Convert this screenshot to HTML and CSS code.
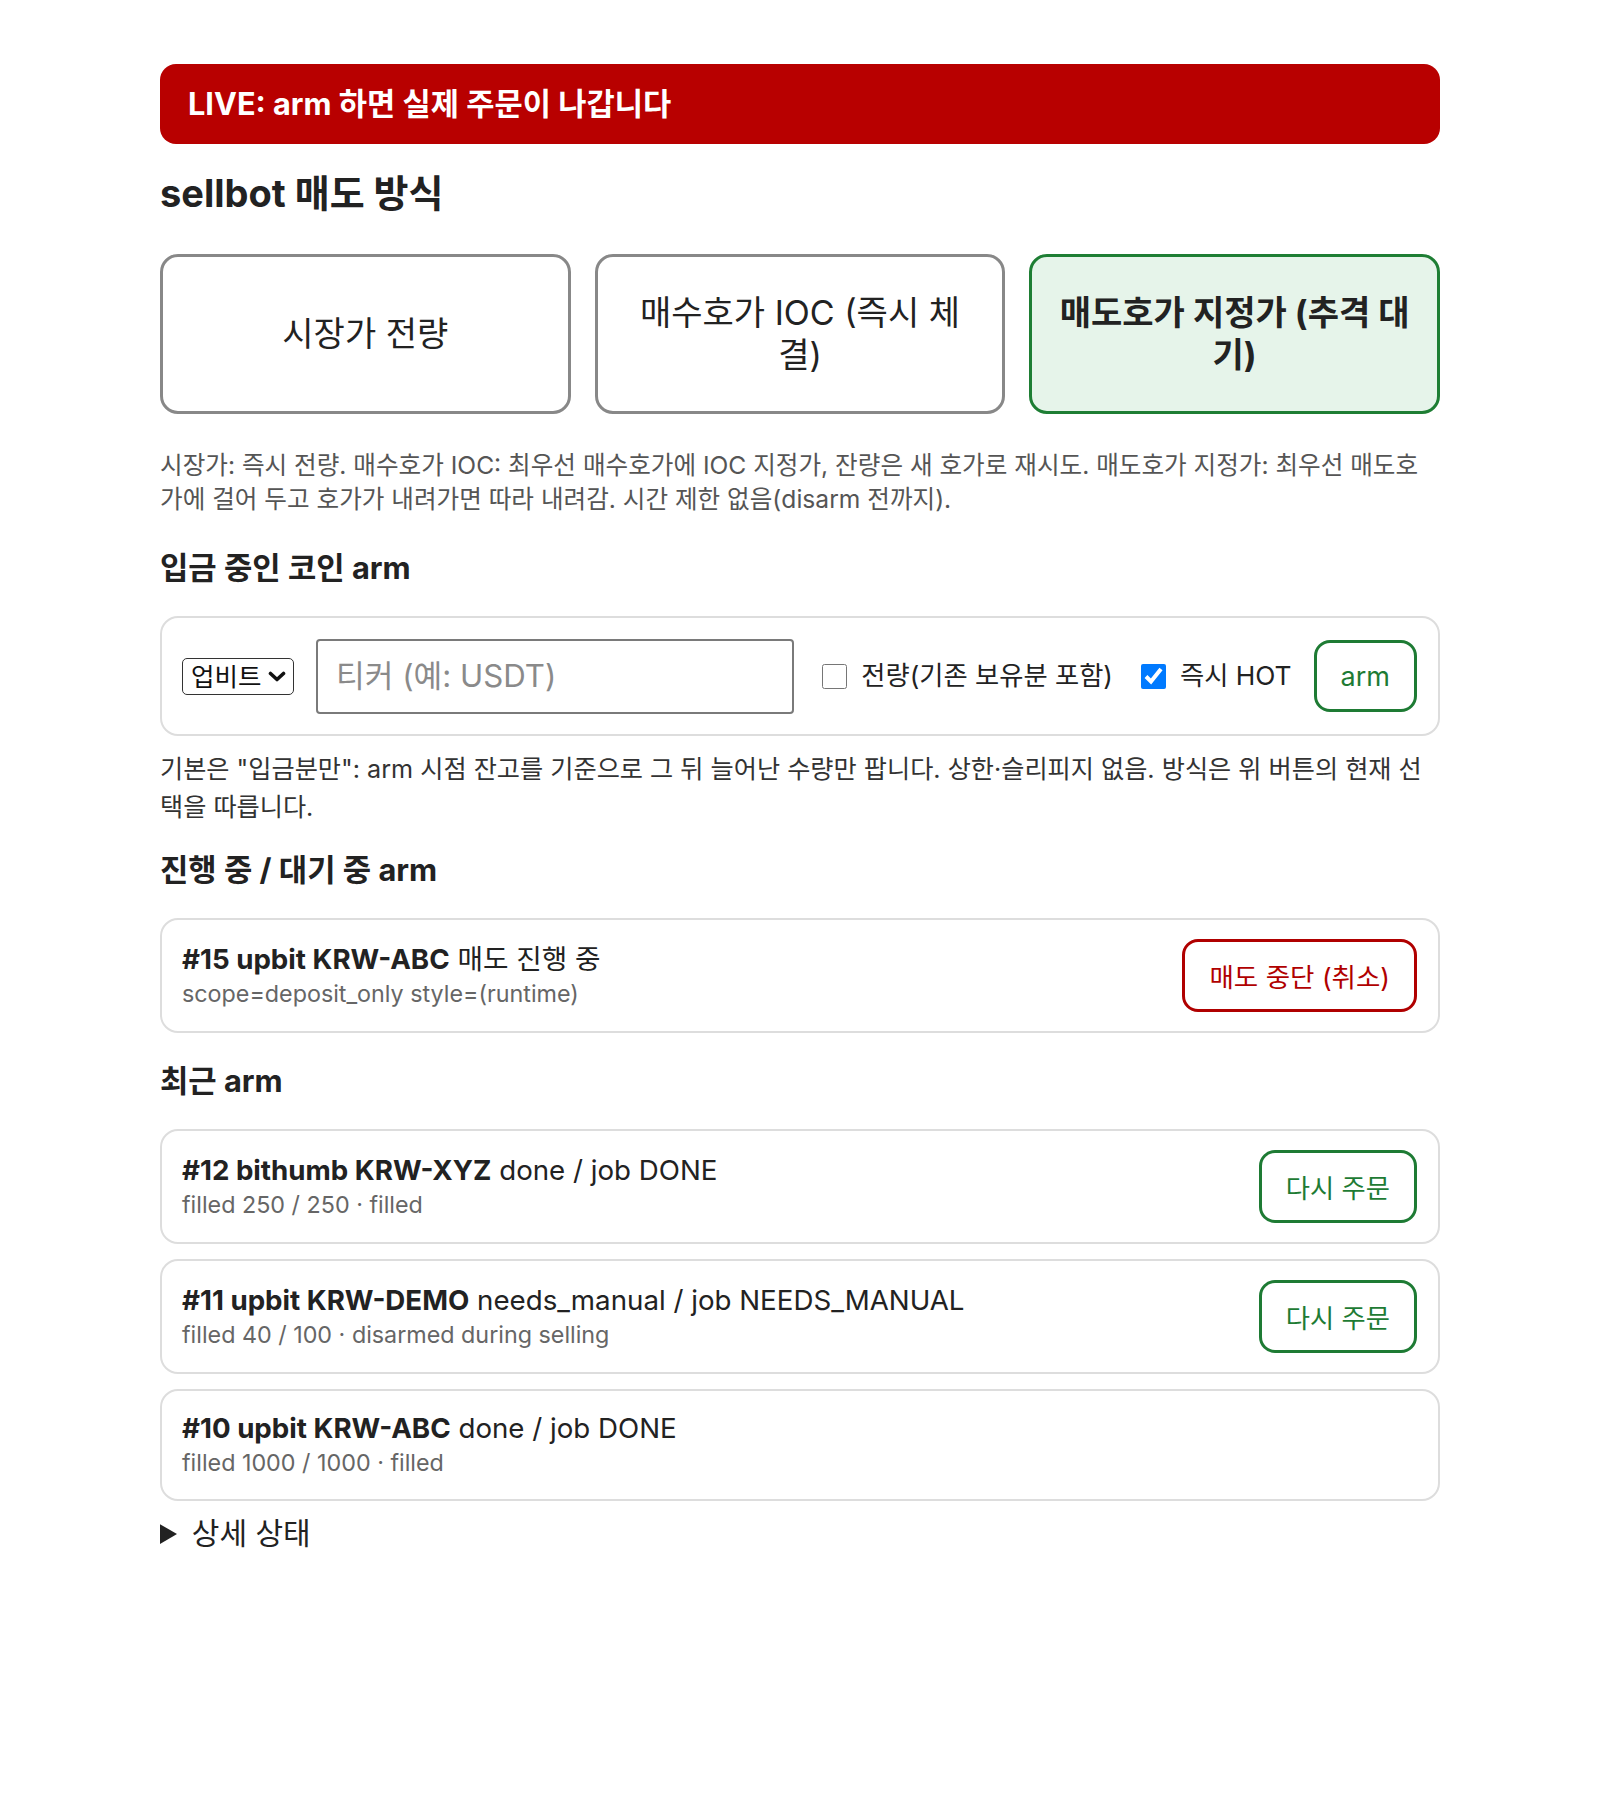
FILE: index.html
```html
<!DOCTYPE html>
<html lang="ko">
<head>
<meta charset="utf-8">
<title>sellbot</title>
<link rel="stylesheet" href="styles.css">
</head>
<body>
<div class="page">
  <div class="banner">LIVE: arm 하면 실제 주문이 나갑니다</div>

  <h2 class="title">sellbot 매도 방식</h2>
  <div class="modes">
    <button class="mode">시장가 전량</button>
    <button class="mode">매수호가 IOC (즉시 체결)</button>
    <button class="mode active">매도호가 지정가 (추격 대기)</button>
  </div>
  <p class="desc">시장가: 즉시 전량. 매수호가 IOC: 최우선 매수호가에 IOC 지정가, 잔량은 새 호가로 재시도. 매도호가 지정가: 최우선 매도호가에 걸어 두고 호가가 내려가면 따라 내려감. 시간 제한 없음(disarm 전까지).</p>

  <h3 class="section">입금 중인 코인 arm</h3>
  <div class="panel arm-form">
    <span class="select-wrap">
      <select class="exch">
        <option>업비트</option>
        <option>빗썸</option>
      </select>
      <svg class="chev" viewBox="0 0 18 11" aria-hidden="true"><path d="M2.5 2.5 L9 8.5 L15.5 2.5" fill="none" stroke="#111" stroke-width="3.6" stroke-linecap="round" stroke-linejoin="round"/></svg>
    </span>
    <input class="ticker" type="text" placeholder="티커 (예: USDT)">
    <label class="check"><input type="checkbox"><span>전량(기존 보유분 포함)</span></label>
    <label class="check"><input type="checkbox" checked><span>즉시 HOT</span></label>
    <button class="btn btn-green btn-arm">arm</button>
  </div>
  <p class="note">기본은 "입금분만": arm 시점 잔고를 기준으로 그 뒤 늘어난 수량만 팝니다. 상한·슬리피지 없음. 방식은 위 버튼의 현재 선택을 따릅니다.</p>

  <h3 class="section">진행 중 / 대기 중 arm</h3>
  <div class="jobs">
    <div class="panel job">
      <div class="job-text">
        <div class="job-title"><b>#15 upbit KRW-ABC</b> 매도 진행 중</div>
        <div class="job-sub">scope=deposit_only style=(runtime)</div>
      </div>
      <button class="btn btn-red">매도 중단 (취소)</button>
    </div>
  </div>

  <h3 class="section">최근 arm</h3>
  <div class="jobs">
    <div class="panel job">
      <div class="job-text">
        <div class="job-title"><b>#12 bithumb KRW-XYZ</b> done / job DONE</div>
        <div class="job-sub">filled 250 / 250 · filled</div>
      </div>
      <button class="btn btn-green">다시 주문</button>
    </div>
    <div class="panel job">
      <div class="job-text">
        <div class="job-title"><b>#11 upbit KRW-DEMO</b> needs_manual / job NEEDS_MANUAL</div>
        <div class="job-sub">filled 40 / 100 · disarmed during selling</div>
      </div>
      <button class="btn btn-green">다시 주문</button>
    </div>
    <div class="panel job">
      <div class="job-text">
        <div class="job-title"><b>#10 upbit KRW-ABC</b> done / job DONE</div>
        <div class="job-sub">filled 1000 / 1000 · filled</div>
      </div>
    </div>
  </div>

  <details class="details">
    <summary>상세 상태</summary>
    <pre class="state">{}</pre>
  </details>
</div>
</body>
</html>
```

FILE: styles.css
```css
* { box-sizing: border-box; }

body {
  margin: 0;
  background: #fff;
  color: #222;
  font-family: Inter, "Noto Sans CJK KR", sans-serif;
}

.page {
  width: 1280px;
  margin: 0 auto;
  padding: 64px 0 120px;
}

.banner {
  background: #b80000;
  color: #fff;
  font-weight: 700;
  font-size: 30.7px;
  line-height: 40px;
  padding: 20px 28px;
  border-radius: 16px;
}

.title {
  font-size: 38px;
  line-height: 44px;
  font-weight: 700;
  margin: 27px 0 39px;
  color: #222;
}

.modes {
  display: grid;
  grid-template-columns: repeat(3, 1fr);
  gap: 24px;
}

.mode {
  min-height: 160px;
  border: 3px solid #888;
  border-radius: 18px;
  background: #fff;
  color: #222;
  font-family: inherit;
  font-size: 34px;
  line-height: 42px;
  font-weight: 400;
  padding: 0 24px;
  display: flex;
  align-items: center;
  justify-content: center;
  text-align: center;
}

.mode.active {
  border-color: #1e7e34;
  background: #e6f4ea;
  font-weight: 700;
}

.desc {
  margin: 34px 0 34px;
  font-size: 24.6px;
  line-height: 34px;
  color: #555;
}

.section {
  font-size: 30.8px;
  line-height: 36px;
  font-weight: 700;
  margin: 30px 0 30px;
  color: #222;
}

.note + .section { margin-top: 26px; }

.panel {
  border: 2px solid #ddd;
  border-radius: 18px;
  background: #fff;
}

.arm-form {
  display: flex;
  align-items: center;
  gap: 22px;
  padding: 20.5px 21px 20.5px 20px;
}

.select-wrap {
  position: relative;
  display: inline-flex;
}

.exch {
  appearance: none;
  -webkit-appearance: none;
  width: 112px;
  height: 37px;
  padding: 0 32px 0 8px;
  font-family: inherit;
  font-size: 25.5px;
  color: #111;
  background: #fff;
  border: 1.5px solid #333;
  border-radius: 5px;
}

.chev {
  position: absolute;
  right: 8px;
  top: 13px;
  width: 18px;
  height: 11px;
  pointer-events: none;
}

.ticker {
  flex: 1;
  min-width: 0;
  height: 75px;
  padding: 0 18px;
  font-family: inherit;
  font-size: 31.2px;
  color: #222;
  border: 2px solid #7a7a7a;
  border-radius: 4px;
  background: #fff;
}

.ticker::placeholder { color: #8a8a8a; }

.check {
  display: flex;
  align-items: center;
  gap: 14px;
  font-size: 26.3px;
  line-height: 36px;
  white-space: nowrap;
  color: #222;
}

.check input {
  width: 25px;
  height: 25px;
  margin: 0 0 0 6px;
  accent-color: #007aff;
}

.btn {
  flex: none;
  height: 73px;
  padding: 0 24px;
  font-family: inherit;
  font-size: 26.3px;
  background: #fff;
  border: 3px solid;
  border-radius: 16px;
  white-space: nowrap;
}

.btn-arm { font-size: 27px; height: 72px; }

.btn-green { color: #1e7b34; border-color: #1e7b34; }
.btn-red { color: #b00000; border-color: #b00000; font-size: 26.5px; }

.note {
  margin: 14px 0 0;
  font-size: 25.2px;
  line-height: 38px;
  color: #333;
}

.jobs {
  display: flex;
  flex-direction: column;
  gap: 15px;
}

.job {
  display: flex;
  align-items: center;
  justify-content: space-between;
  gap: 20px;
  padding: 19px 21px 19px 20px;
}

.job-title {
  font-size: 27.7px;
  line-height: 36px;
  color: #222;
}

.job-title b { font-weight: 700; }

.job-sub {
  font-size: 23.3px;
  line-height: 34px;
  color: #666;
}

.details {
  margin-top: 14px;
  font-size: 30px;
  line-height: 36px;
  color: #222;
}

.details summary { cursor: pointer; }

.state {
  font-size: 18px;
  margin: 8px 0 0;
}
```
